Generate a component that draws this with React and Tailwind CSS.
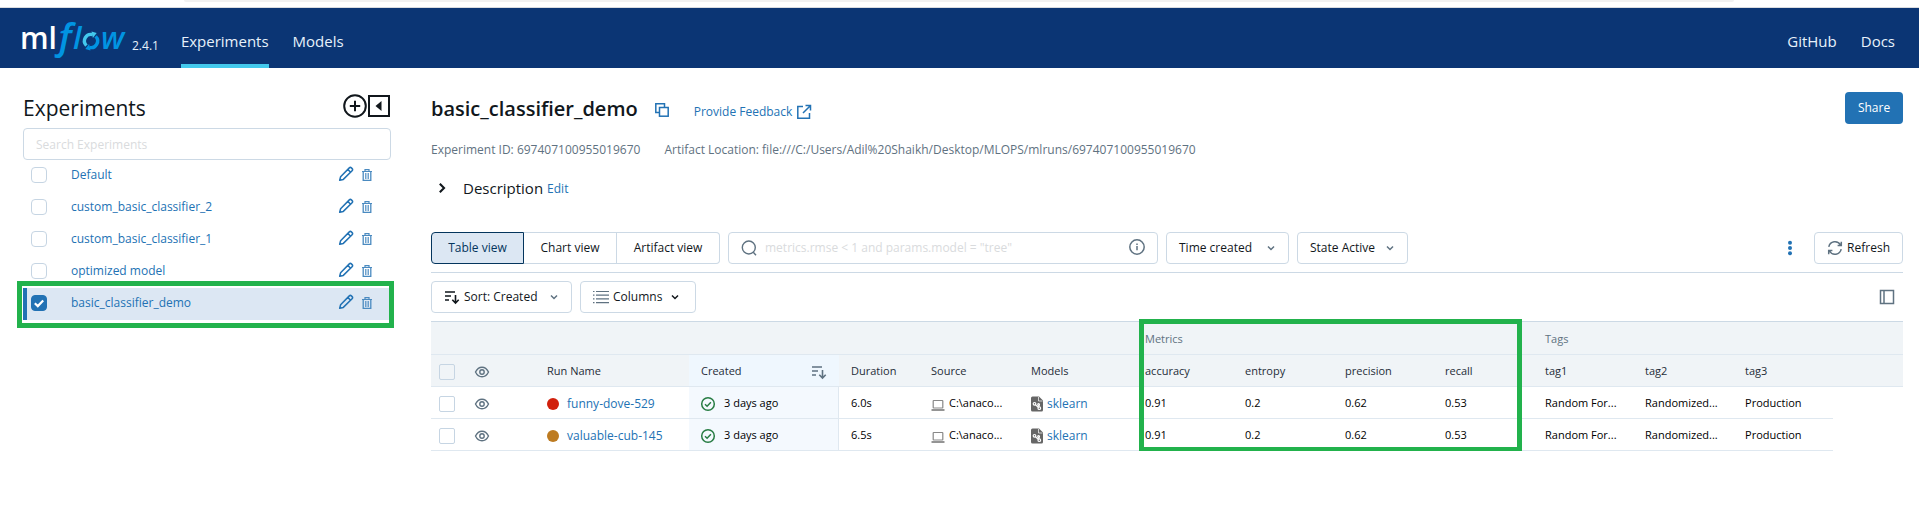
const experiments = [
  { name: "Default" },
  { name: "custom_basic_classifier_2" },
  { name: "custom_basic_classifier_1" },
  { name: "optimized model" },
  { name: "basic_classifier_demo", selected: true },
];

const runs = [
  { name: "funny-dove-529", dot: "bg-[#d1200c]", duration: "6.0s" },
  { name: "valuable-cub-145", dot: "bg-[#bd7b21]", duration: "6.5s" },
];

const metricHeads = ["accuracy", "entropy", "precision", "recall", "tag1", "tag2", "tag3"];
const metricValues = ["0.91", "0.2", "0.62", "0.53", "Random For...", "Randomized...", "Production"];

function Logo() {
  return (
    <svg viewBox="0 0 108 44" className="h-11 w-[108px] overflow-visible" role="img" aria-label="mlflow">
      <text y="33" fontFamily="'Open Sans', sans-serif" fontSize="30" fontWeight="600" fill="#fff">
        <tspan x="-2">ml</tspan>
        <tspan x="33" fontSize="38" fontStyle="italic" fill="#0194e2">ƒ</tspan>
        <tspan x="51" fontSize="31" fontStyle="italic" fill="#0194e2">l</tspan>
        <tspan x="79" fontSize="31" fontStyle="italic" fill="#0194e2">w</tspan>
      </text>
      <g fill="none" strokeWidth="3.4">
        <path d="M64.400 29.600A6.500 6.500 0 0 1 70.700 18.700" stroke="#43c9ed" />
        <path d="M73.600 20.400A6.500 6.500 0 0 1 67.300 31.300" stroke="#0194e2" />
      </g>
      <path d="M69.500 15.500l5.200 1.400-3.800 5z" fill="#43c9ed" />
      <path d="M68.500 34.500l-5.200-1.400 3.800-5z" fill="#0194e2" />
    </svg>
  );
}

function Chevron({ className }) {
  return (
    <svg viewBox="0 0 16 16" className={className} fill="none" stroke="currentColor" strokeWidth="2.400" aria-hidden="true">
      <path d="M3.200 5.500l4.800 4.800 4.800-4.800" />
    </svg>
  );
}

function Eye() {
  return (
    <svg viewBox="0 0 16 16" className="size-4" fill="none" stroke="#5f7281" strokeWidth="1.400" aria-hidden="true">
      <path d="M1.500 8C3 5 5.300 3.200 8 3.200S13 5 14.500 8C13 11 10.700 12.800 8 12.800S3 11 1.500 8z" />
      <circle cx="8" cy="8" r="2.200" />
    </svg>
  );
}

function SortIcon({ className }) {
  return (
    <svg viewBox="0 0 16 16" className={className} fill="none" stroke="currentColor" strokeWidth="1.600" aria-hidden="true">
      <path d="M1 3h10M1 7h6M1 11h4M11.500 6v8M8.300 10.800l3.200 3.200 3.200-3.200" />
    </svg>
  );
}

function Pencil() {
  return (
    <svg viewBox="0 0 16 16" className="size-4" fill="none" stroke="#2272b4" strokeWidth="1.500" strokeLinejoin="round" aria-hidden="true">
      <path d="M1.700 14.300l.9-3.600 8.700-8.800a1.500 1.500 0 0 1 2.100 0l.7.700a1.500 1.500 0 0 1 0 2.100l-8.800 8.700zM9.800 3.400l2.800 2.800" />
    </svg>
  );
}

function Trash() {
  return (
    <svg viewBox="0 0 12 12" className="size-3" fill="none" stroke="#4a8ac0" aria-hidden="true">
      <path d="M1 2.500h10M4 2V.7h4V2" strokeWidth="1.200" />
      <path d="M2.200 3v8.300h7.600V3" strokeWidth="1.300" />
      <path d="M4.500 4v6M6 4v6M7.500 4v6" strokeWidth=".8" />
    </svg>
  );
}

function CheckCircle() {
  return (
    <svg viewBox="0 0 16 16" className="size-4 shrink-0" fill="none" stroke="#277c43" strokeWidth="1.500" aria-hidden="true">
      <circle cx="8" cy="8" r="6.300" />
      <path d="M5 8.200l2.100 2 3.800-3.900" />
    </svg>
  );
}

function Laptop() {
  return (
    <svg viewBox="0 0 14 14" className="mt-0.5 size-[14px] shrink-0" fill="none" stroke="#888" aria-hidden="true">
      <rect x="2.200" y="2.500" width="9.600" height="7.500" rx=".5" strokeWidth="1.200" />
      <path d="M.5 12h13" strokeWidth="1.800" />
    </svg>
  );
}

function ModelFile() {
  return (
    <svg viewBox="0 0 12 16" className="h-4 w-3 shrink-0" aria-hidden="true">
      <path d="M1.500.5H8L12 4.500V14a1.500 1.500 0 0 1-1.500 1.500h-9A1.500 1.500 0 0 1 0 14V2A1.500 1.500 0 0 1 1.500.5z" fill="#666" />
      <path d="M7.500 1v4h4" fill="none" stroke="#fff" strokeWidth=".7" />
      <g fill="none" stroke="#fff" strokeWidth="1.200">
        <circle cx="3.500" cy="7.800" r="1.300" />
        <circle cx="7.600" cy="8.500" r=".9" />
        <circle cx="8.300" cy="12.200" r="1.300" />
        <path d="M4.500 8.800l2.800 2.600M7.800 9.400l.3 1.500" />
      </g>
    </svg>
  );
}

function Checkbox({ label, checked, square }) {
  return (
    <span className="grid size-4 shrink-0">
      <input
        type="checkbox"
        aria-label={label}
        defaultChecked={checked}
        className={
          "peer col-start-1 row-start-1 size-4 appearance-none border border-[#c6d5e3] bg-transparent checked:border-[#2272b4] checked:bg-[#2272b4] " +
          (square ? "rounded-xs" : "rounded")
        }
      />
      <svg viewBox="0 0 16 16" className="pointer-events-none invisible col-start-1 row-start-1 size-4 peer-checked:visible" fill="none" stroke="#fff" strokeWidth="2.200" aria-hidden="true">
        <path d="M3.800 8.300l3 2.800 5.400-5.600" />
      </svg>
    </span>
  );
}

const outlined = "flex h-8 items-center rounded border border-[#ccd9e5] text-[#11171c]";

export default function App() {
  return (
    <div className="bg-white font-['Open_Sans',sans-serif] text-xs text-[#11171c]">
      <div className="flex h-2 items-start border-b border-[#dadce0] pr-[185px] pl-[184px]">
        <div className="h-0.5 flex-1 rounded-b bg-[#f1f1f1]" />
      </div>

      <header className="flex h-[60px] bg-[#0b3574] pr-6 pl-[22px] text-[15px] text-[#e7f1fb]">
        <div className="flex items-end gap-0.5 pb-2">
          <Logo />
          <span className="pb-1.5 text-xs">2.4.1</span>
        </div>
        <nav className="ml-[22px] flex flex-1 gap-6">
          <a href="#experiments" className="flex items-center border-b-4 border-[#43c9ed] pt-2.5">Experiments</a>
          <a href="#models" className="flex items-center border-b-4 border-transparent pt-2.5">Models</a>
          <a href="#github" className="ml-auto flex items-center border-b-4 border-transparent pt-2.5">GitHub</a>
          <a href="#docs" className="flex items-center border-b-4 border-transparent pt-2.5">Docs</a>
        </nav>
      </header>

      <div className="flex gap-10 pr-4 pl-[23px]">
        <aside className="w-[368px] shrink-0 pt-6">
          <div className="flex h-9 items-start justify-between">
            <h1 className="text-[21px] leading-8 font-medium">Experiments</h1>
            <div className="flex items-center pt-0.5">
              <button aria-label="New experiment">
                <svg viewBox="0 0 24 24" className="size-6" fill="none" stroke="#11171c" strokeWidth="2">
                  <circle cx="12" cy="12" r="10.800" />
                  <path d="M12 6.800v10.400M6.800 12h10.400" />
                </svg>
              </button>
              <button aria-label="Hide experiment list">
                <svg viewBox="0 0 24 24" className="size-6" fill="none" stroke="#11171c" strokeWidth="2">
                  <rect x="2" y="2" width="20" height="20" />
                  <path d="M8.500 12l6-5v10z" fill="#11171c" stroke="none" />
                </svg>
              </button>
            </div>
          </div>
          <input
            type="text"
            aria-label="Search Experiments"
            placeholder="Search Experiments"
            className="h-8 w-full rounded border border-[#ccd9e5] px-3 placeholder:text-[#d9dbdd]"
          />
          <div className="relative">
            <ul>
              {experiments.map((e) => (
                <li
                  key={e.name}
                  className={
                    "flex h-8 items-center border-l-4 pr-[18px] pb-0.5 pl-1 " +
                    (e.selected ? "border-[#2272b4] bg-[#dce7f3]" : "border-transparent")
                  }
                >
                  <Checkbox label={"Select " + e.name} checked={e.selected} />
                  <a href="#experiment" className="ml-6 flex-1 text-[#2272b4]">{e.name}</a>
                  <button aria-label={"Rename " + e.name} className="mr-[7px] pb-0.5"><Pencil /></button>
                  <button aria-label={"Delete " + e.name}><Trash /></button>
                </li>
              ))}
            </ul>
            <div className="pointer-events-none absolute -right-[3px] -bottom-2 -left-1.5 h-[47px] border-[5px] border-[#22b24c]" />
          </div>
        </aside>

        <main className="min-w-0 flex-1 pt-6">
          <div className="flex h-8 items-center pt-0.5">
            <h2 className="text-xl font-semibold">basic_classifier_demo</h2>
            <button aria-label="Copy name" className="ml-4 pt-0.5">
              <svg viewBox="0 0 16 16" className="size-4" fill="none" stroke="#2272b4" strokeWidth="1.500">
                <path d="M5.500 10.500H1.800V1.800h8.700v3.700" />
                <rect x="5.500" y="5.500" width="8.700" height="8.700" />
              </svg>
            </button>
            <a href="#feedback" className="ml-6 flex items-center gap-1 pt-1.5 text-[#2272b4]">
              Provide Feedback
              <svg viewBox="0 0 16 16" className="size-4" fill="none" stroke="currentColor" strokeWidth="1.500" aria-hidden="true">
                <path d="M7 2.500H1.800v11.700h11.700V9M9.500 1.500h5v5M14.300 1.700L7 9" />
              </svg>
            </a>
            <button className="mb-0.5 ml-auto h-8 w-[58px] rounded bg-[#2272b4] text-white">Share</button>
          </div>

          <div className="mt-3.5 flex h-6 items-center gap-6 text-[#5f7281]">
            <span>Experiment ID: 697407100955019670</span>
            <span>Artifact Location: file:///C:/Users/Adil%20Shaikh/Desktop/MLOPS/mlruns/697407100955019670</span>
          </div>

          <div className="mt-3.5 flex h-6 items-center">
            <button aria-label="Expand description" className="ml-1">
              <Chevron className="size-3.5 -rotate-90" />
            </button>
            <span className="ml-[14px] text-[15px]">Description</span>
            <button className="ml-1 pt-0.5 text-[#2272b4]">Edit</button>
          </div>

          <div className="mt-8 flex gap-2 border-b border-[#ccd9e5] pb-2">
            <div className="flex">
              <button className="h-8 w-[93px] rounded-l border border-[#04355d] bg-[#dce7f3] text-[#04355d]">Table view</button>
              <button className="h-8 w-[93px] border-y border-r border-[#ccd9e5]">Chart view</button>
              <button className="h-8 w-[103px] rounded-r border-y border-r border-[#ccd9e5]">Artifact view</button>
            </div>
            <div className={outlined + " w-[430px] gap-2 px-3"}>
              <svg viewBox="0 0 16 16" className="size-4" fill="none" stroke="#5f7281" strokeWidth="1.400" aria-hidden="true">
                <circle cx="7.800" cy="7.500" r="6.500" />
                <path d="M12.300 12.300l2.700 2.900" />
              </svg>
              <input
                type="text"
                aria-label="Search runs"
                placeholder={'metrics.rmse < 1 and params.model = "tree"'}
                className="min-w-0 flex-1 outline-none placeholder:text-[#d9dbdd]"
              />
              <button aria-label="Search help" className="pb-0.5">
                <svg viewBox="0 0 16 16" className="size-4" fill="none" stroke="#5f7281" strokeWidth="1.500">
                  <circle cx="8" cy="8" r="7.200" />
                  <path d="M8 7v4.300M8 4.500v1.500" />
                </svg>
              </button>
            </div>
            <button className={outlined + " w-[123px] justify-between px-3 font-medium"}>
              Time created
              <Chevron className="size-2.5 text-[#5f7281]" />
            </button>
            <button className={outlined + " w-[111px] justify-between px-3"}>
              <span><span className="font-medium">State</span> Active</span>
              <Chevron className="size-2.5 text-[#5f7281]" />
            </button>
            <button aria-label="More options" className="mr-2 ml-auto">
              <svg viewBox="0 0 16 16" className="size-4" fill="#2272b4">
                <circle cx="8" cy="2.700" r="2" />
                <circle cx="8" cy="8" r="2" />
                <circle cx="8" cy="13.300" r="2" />
              </svg>
            </button>
            <button className={outlined + " gap-1 px-3"}>
              <svg viewBox="0 0 16 16" className="size-4" fill="none" stroke="#5f7281" strokeWidth="1.500" aria-hidden="true">
                <path d="M1.800 6.800A6.300 6.300 0 0 1 13.500 5M14.200 9.200A6.300 6.300 0 0 1 2.500 11M14.300 1.800v3.700h-3.700M1.700 14.200v-3.700h3.700" />
              </svg>
              Refresh
            </button>
          </div>

          <div className="flex items-center gap-2 py-2">
            <button className={outlined + " w-[141px] gap-1 px-3"}>
              <SortIcon className="size-4" />
              Sort: Created
              <Chevron className="ml-auto size-2.5 text-[#5f7281]" />
            </button>
            <button className={outlined + " w-[116px] gap-1 px-3"}>
              <svg viewBox="0 0 16 14" className="h-[14px] w-4" fill="none" stroke="#5f7281" strokeWidth="1.200" aria-hidden="true">
                <path d="M0 1.500h1.500M0 5.200h1.500M0 8.900h1.500M0 12.600h1.500M3 1.500h13M3 5.200h13M3 8.900h13M3 12.600h13" />
              </svg>
              Columns
              <Chevron className="ml-1 size-2.5" />
            </button>
            <button aria-label="Toggle side panel" className="mr-2 ml-auto">
              <svg viewBox="0 0 16 16" className="size-4" fill="none" stroke="#5f7281" strokeWidth="1.500">
                <rect x="1.500" y="1.500" width="13" height="13" />
                <path d="M5 1.500v13" />
              </svg>
            </button>
          </div>

          <div className="relative border-t border-[#ccd9e5]">
            <table className="w-full table-fixed border-separate border-spacing-0 text-[11px]">
              <colgroup>
                <col className="w-[40px]" />
                <col className="w-[64px]" />
                <col className="w-[154px]" />
                <col className="w-[150px]" />
                <col className="w-[80px]" />
                <col className="w-[100px]" />
                <col className="w-[114px]" />
                {metricHeads.map((h) => <col key={h} className="w-[100px]" />)}
                <col />
              </colgroup>
              <thead className="bg-[#f0f4f7] text-left text-[#1f2d38] [&_th]:border-b [&_th]:border-[#dfe8f0] [&_th]:p-0">
                <tr className="h-[33px] text-[#5f7281] [&_th]:pt-0.5 [&_th]:font-medium">
                  <th colSpan={7} />
                  <th colSpan={4} className="pl-3!">Metrics</th>
                  <th colSpan={4} className="pl-3!">Tags</th>
                </tr>
                <tr className="h-8 [&_th]:pt-0.5 [&_th]:font-medium">
                  <th className="pl-2!"><Checkbox label="Select all runs" square /></th>
                  <th><span className="flex pl-[3px]"><Eye /></span></th>
                  <th className="pl-3!">Run Name</th>
                  <th className="bg-[#eff7fe] px-3!">
                    <span className="flex items-center justify-between">
                      Created
                      <SortIcon className="size-4 text-[#5f7281]" />
                    </span>
                  </th>
                  <th className="pl-3!">Duration</th>
                  <th className="pl-3!">Source</th>
                  <th className="pl-3!">Models</th>
                  {metricHeads.map((h) => <th key={h} className="pl-3!">{h}</th>)}
                  <th />
                </tr>
              </thead>
              <tbody className="text-black">
                {runs.map((r) => (
                  <tr key={r.name} className="h-8 [&_td]:border-[#dfe8f0] [&_td]:pt-0.5 [&_td:not(:last-child)]:border-b">
                    <td className="pl-2"><Checkbox label={"Select " + r.name} square /></td>
                    <td><span className="flex pl-[3px]"><Eye /></span></td>
                    <td className="pl-3">
                      <span className="flex items-center gap-2">
                        <span className={"size-3 rounded-full " + r.dot} />
                        <a href="#run" className="text-xs text-[#2272b4]">{r.name}</a>
                      </span>
                    </td>
                    <td className="border-r bg-[#f4f9fe] pl-[11px]">
                      <span className="flex items-center gap-2"><CheckCircle />3 days ago</span>
                    </td>
                    <td className="pl-3">{r.duration}</td>
                    <td className="pl-3">
                      <span className="flex items-center gap-1"><Laptop />C:\anaco...</span>
                    </td>
                    <td className="pl-3">
                      <span className="flex items-center gap-1">
                        <ModelFile />
                        <a href="#model" className="text-xs text-[#2272b4]">sklearn</a>
                      </span>
                    </td>
                    {metricValues.map((v) => <td key={v} className="pl-3 whitespace-nowrap">{v}</td>)}
                    <td />
                  </tr>
                ))}
              </tbody>
            </table>
            <div className="pointer-events-none absolute -top-[3px] left-[708px] h-[133px] w-[383px] border-[5px] border-[#22b24c]" />
          </div>
        </main>
      </div>
    </div>
  );
}
